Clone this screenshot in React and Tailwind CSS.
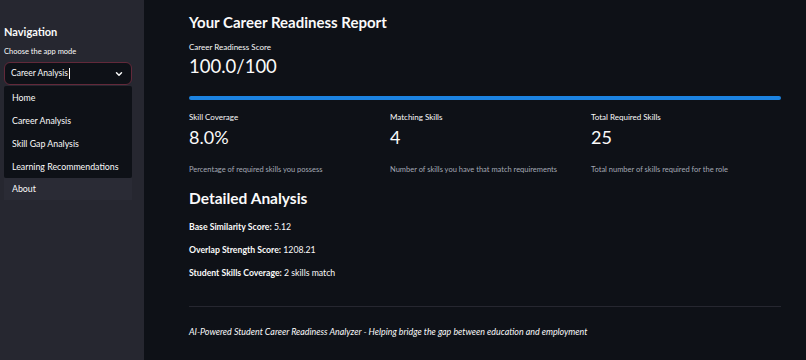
import { ChevronDown } from 'lucide-react'

const OPTIONS = ['Home', 'Career Analysis', 'Skill Gap Analysis', 'Learning Recommendations']

const METRICS = [
  { label: 'Skill Coverage', value: '8.0%', help: 'Percentage of required skills you possess' },
  { label: 'Matching Skills', value: '4', help: 'Number of skills you have that match requirements' },
  { label: 'Total Required Skills', value: '25', help: 'Total number of skills required for the role' },
]

const DETAILS = [
  ['Base Similarity Score:', '5.12'],
  ['Overlap Strength Score:', '1208.21'],
  ['Student Skills Coverage:', '2 skills match'],
]

export default function App() {
  return (
    <div className="flex w-[806px] h-[360px] overflow-hidden bg-[#0e1117] text-[#fafafa] font-['Lato',sans-serif]">
      {/* Sidebar */}
      <aside className="w-[144px] shrink-0 bg-[#262730] pl-[4px] pr-[12px] pt-[24px]">
        <h2 className="text-[11px] font-bold leading-[16px] text-[#fafafa]">Navigation</h2>
        <div className="mt-[6px] text-[7.5px] leading-[12px] text-[#fafafa]">Choose the app mode</div>
        <div className="mt-[4px] flex h-[23px] items-center justify-between rounded-[6px] border border-[#62293a] bg-[#0e1117] pl-[6px] pr-[7px]">
          <span className="flex items-center text-[8.5px] text-[#fafafa]">
            Career Analysis
            <span className="ml-[1px] inline-block h-[11px] w-px bg-[#fafafa]" />
          </span>
          <ChevronDown size={10} strokeWidth={3.5} className="text-[#fafafa]" />
        </div>
        <div className="mt-[1px]">
          <ul className="bg-[#0e1117] rounded-[2px]">
            {OPTIONS.map((o) => (
              <li key={o} className="flex h-[23px] items-center pl-[8px] text-[8.8px] text-[#fafafa]">
                {o}
              </li>
            ))}
          </ul>
          <div className="flex h-[22px] items-center bg-[#2a2b35] pl-[8px] text-[8.8px] text-[#fafafa]">About</div>
        </div>
      </aside>

      {/* Main */}
      <main className="flex-1 pl-[45px] pr-[25px] pt-[11px]">
        <h1 className="text-[15px] font-bold leading-[22px]">Your Career Readiness Report</h1>

        <div className="mt-[9px] text-[8px] leading-[11px]">Career Readiness Score</div>
        <div className="mt-[1px] text-[18.5px] leading-[24px]">100.0/100</div>

        <div className="mt-[18px] h-[4px] rounded-full bg-[#1c83e1]" />

        <div className="mt-[12px] grid grid-cols-[201px_201px_1fr]">
          {METRICS.map((m) => (
            <div key={m.label}>
              <div className="text-[8px] leading-[11px]">{m.label}</div>
              <div className="mt-[2px] text-[18px] leading-[24px]">{m.value}</div>
              <div className="mt-[16px] text-[7.5px] leading-[10px] text-[#a3a8b4]">{m.help}</div>
            </div>
          ))}
        </div>

        <h2 className="mt-[13px] text-[15.5px] font-bold leading-[20px]">Detailed Analysis</h2>
        <div className="mt-[13px] flex flex-col gap-[12px]">
          {DETAILS.map(([k, v]) => (
            <div key={k} className="text-[8.7px] leading-[11px]">
              <span className="font-bold">{k}</span> {v}
            </div>
          ))}
        </div>

        <hr className="mt-[28px] border-t border-[#262730]" />
        <p className="mt-[19px] text-[8.9px] italic leading-[11px] text-[#fafafa]">
          AI-Powered Student Career Readiness Analyzer - Helping bridge the gap between education and employment
        </p>
      </main>
    </div>
  )
}
